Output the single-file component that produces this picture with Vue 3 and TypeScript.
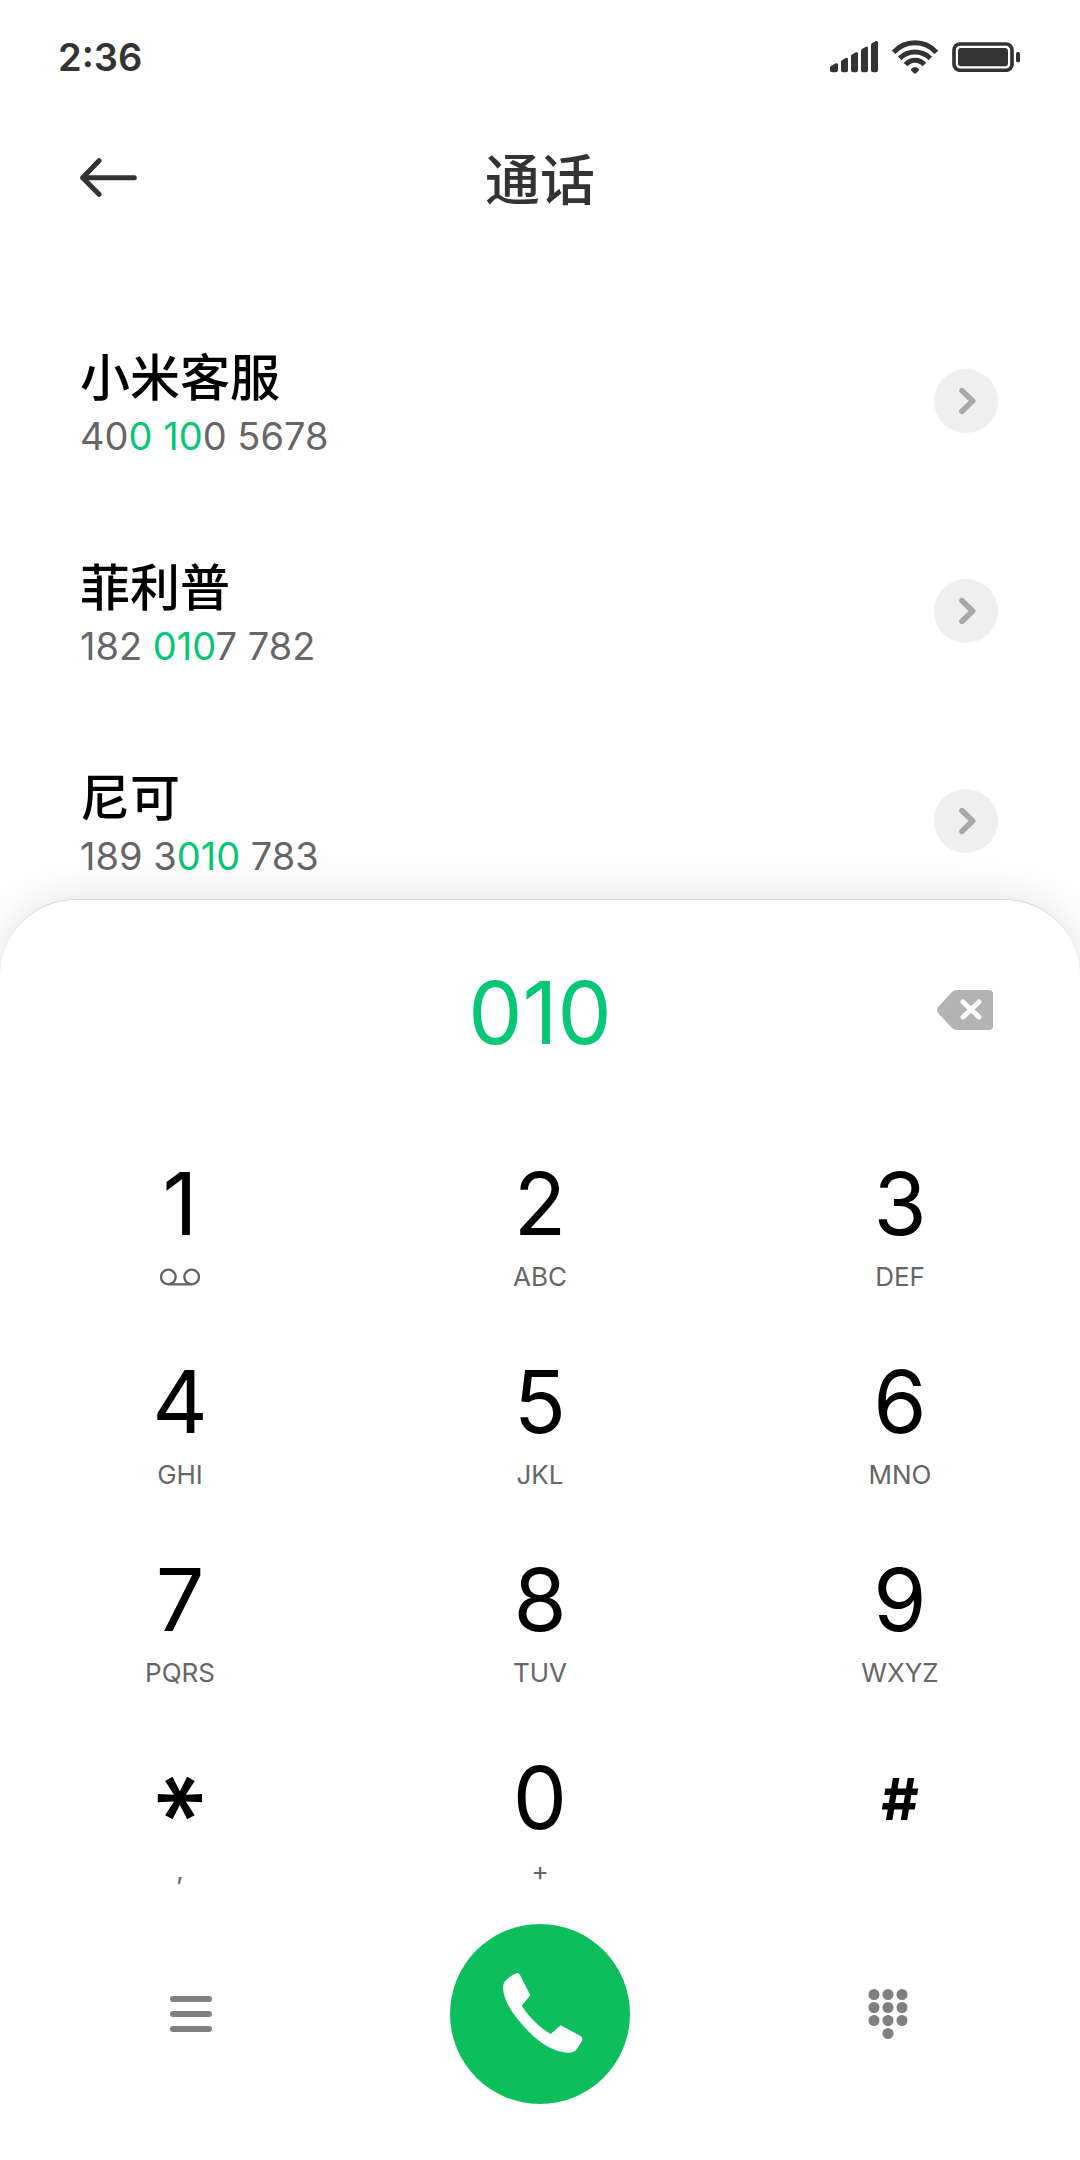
<script setup lang="ts">
import { computed, ref } from 'vue'

interface Contact {
  name: string
  phone: string
}

interface Key {
  symbol: string
  label: string
}

interface Segment {
  text: string
  hit: boolean
}

const contacts: Contact[] = [
  { name: '小米客服', phone: '400 100 5678' },
  { name: '菲利普', phone: '182 0107 782' },
  { name: '尼可', phone: '189 3010 783' },
]

const keys: Key[] = [
  { symbol: '1', label: '' },
  { symbol: '2', label: 'ABC' },
  { symbol: '3', label: 'DEF' },
  { symbol: '4', label: 'GHI' },
  { symbol: '5', label: 'JKL' },
  { symbol: '6', label: 'MNO' },
  { symbol: '7', label: 'PQRS' },
  { symbol: '8', label: 'TUV' },
  { symbol: '9', label: 'WXYZ' },
  { symbol: '*', label: ',' },
  { symbol: '0', label: '+' },
  { symbol: '#', label: '' },
]

const dialed = ref('010')

// Splits a phone number around the dialed digits, ignoring spaces.
function segments(phone: string, query: string): Segment[] {
  const match = query
    ? phone.match(new RegExp(query.replace(/[^0-9]/g, '').split('').join(' ?')))
    : null
  if (!match || match.index === undefined) return [{ text: phone, hit: false }]
  const end = match.index + match[0].length
  return [
    { text: phone.slice(0, match.index), hit: false },
    { text: match[0], hit: true },
    { text: phone.slice(end), hit: false },
  ]
}

const rows = computed(() =>
  contacts.map((c) => ({ ...c, parts: segments(c.phone, dialed.value) })),
)

function press(symbol: string) {
  dialed.value += symbol
}

function erase() {
  dialed.value = dialed.value.slice(0, -1)
}
</script>

<template>
  <div class="page">
    <div class="status">
      <span class="time">2:36</span>
      <div class="indicators">
        <svg width="48" height="32" viewBox="0 0 144 96" fill="#333">
          <path d="M0 80Q0 76 4 74L18 67Q24 65 24 71V87Q24 94 17 94H7Q0 94 0 87Z" />
          <path d="M33 63Q33 59 37 57L48 51Q54 49 54 55V88Q54 94 48 94H39Q33 94 33 88Z" />
          <path d="M63 46Q63 42 67 40L78 34Q84 32 84 38V88Q84 94 78 94H69Q63 94 63 88Z" />
          <path d="M93 29Q93 25 97 23L108 17Q114 15 114 21V88Q114 94 108 94H99Q93 94 93 88Z" />
          <path d="M123 12Q123 8 127 6L138 0Q144 -1 144 5V88Q144 94 138 94H129Q123 94 123 88Z" />
        </svg>
        <svg width="46" height="34" viewBox="0 0 138 102" fill="none" stroke="#333" stroke-width="15">
          <path d="M5 37A85 85 0 0 1 133 37" />
          <path d="M23 55A66 66 0 0 1 115 55" />
          <path d="M41 74A36 36 0 0 1 97 74" />
          <path d="M58 86Q69 76 80 86Q83 90 79 93L73 99Q69 102 65 99L59 93Q55 90 58 86Z" fill="#333" stroke="none" />
        </svg>
        <svg width="68" height="30" viewBox="0 0 204 90">
          <rect x="6" y="6" width="174" height="79" rx="18" fill="none" stroke="#333" stroke-width="11" />
          <rect x="18" y="18" width="150" height="55" rx="9" fill="#333" />
          <rect x="192" y="30" width="12" height="31" rx="5" fill="#333" />
        </svg>
      </div>
    </div>

    <header class="header">
      <button class="icon-button" type="button" aria-label="返回">
        <svg width="57" height="39" viewBox="0 0 171 117" fill="none" stroke="#333" stroke-width="15" stroke-linecap="round" stroke-linejoin="round">
          <path d="M57 8L8 59L57 109M8 59H163" />
        </svg>
      </button>
      <h1 class="title">通话</h1>
    </header>

    <ul class="contacts">
      <li v-for="row in rows" :key="row.name" class="contact">
        <div class="details">
          <div class="name">{{ row.name }}</div>
          <div class="phone"><span v-for="(part, i) in row.parts" :key="i" :class="{ hit: part.hit }">{{ part.text }}</span></div>
        </div>
        <button class="more" type="button" :aria-label="row.name">
          <svg width="64" height="64" viewBox="0 0 192 192" fill="none" stroke="#a8a8a8" stroke-width="17" stroke-linecap="round" stroke-linejoin="round">
            <path d="M84 65L116 96L84 127" />
          </svg>
        </button>
      </li>
    </ul>

    <section class="sheet">
      <div class="display">
        <output class="dialed">{{ dialed }}</output>
        <button class="icon-button erase" type="button" aria-label="删除" @click="erase">
          <svg width="56" height="40" viewBox="0 0 56 40">
            <path d="M20 0H52Q56 0 56 4V36Q56 40 52 40H20Q17 40 15 38L1 23Q-1 20 1 17L15 2Q17 0 20 0Z" fill="#b3b3b3" />
            <path d="M26 12L42 27M42 12L26 27" stroke="#fff" stroke-width="5" stroke-linecap="round" />
          </svg>
        </button>
      </div>

      <div class="keypad">
        <button v-for="key in keys" :key="key.symbol" class="key" type="button" @click="press(key.symbol)">
          <span class="symbol" :class="{ star: key.symbol === '*', hash: key.symbol === '#' }">{{ key.symbol }}</span>
          <span class="label">
            <svg v-if="key.symbol === '1'" width="40" height="18" viewBox="0 0 120 54" fill="none" stroke="#666" stroke-width="7">
              <circle cx="25" cy="27" r="22" />
              <circle cx="95" cy="27" r="22" />
              <path d="M25 49H95" />
            </svg>
            <template v-else>{{ key.label }}</template>
          </span>
        </button>
      </div>

      <div class="actions">
        <button class="icon-button" type="button" aria-label="菜单">
          <svg width="42" height="36" viewBox="0 0 42 36" fill="#808080">
            <rect v-for="y in [0, 15, 30]" :key="y" :y="y" width="42" height="6" rx="3" />
          </svg>
        </button>
        <button class="call" type="button" aria-label="拨打">
          <svg width="180" height="180" viewBox="0 0 180 180" fill="#fff">
            <path d="M67 49Q69 49 70 51L80.300 71.300L71.700 81.700C79 93 89 103 100.700 110L110.700 101.300L131 112.300Q133 114 132 117L127 125Q124 129 117.300 128.700C104 128 89 119 76.700 105.500C65 93 54 79 53 64.300Q53 59 56 56.300Q61 51 67 49Z" />
          </svg>
        </button>
        <button class="icon-button" type="button" aria-label="拨号盘">
          <svg width="42" height="50" viewBox="0 0 42 50" fill="#808080">
            <template v-for="y in [5.5, 18.5, 31.5]" :key="y">
              <circle v-for="x in [6, 20, 34]" :key="x" :cx="x" :cy="y" r="5.500" />
            </template>
            <circle cx="20" cy="44.500" r="5.500" />
          </svg>
        </button>
      </div>
    </section>
  </div>
</template>

<style>
body {
  background: #fff;
}
</style>

<style scoped>
.page {
  display: flex;
  flex-direction: column;
  height: 100vh;
  background: #fff;
  color: #000;
  font-family: Inter, 'Noto Sans CJK SC', sans-serif;
}

button {
  padding: 0;
  border: 0;
  background: none;
  color: inherit;
  font: inherit;
  cursor: pointer;
}

svg {
  display: block;
}

.status {
  display: flex;
  flex: none;
  align-items: center;
  justify-content: space-between;
  height: 114px;
  padding: 0 60px 0 58px;
}

.time {
  color: #333;
  font-size: 38px;
  font-weight: 600;
}

.indicators {
  display: flex;
  align-items: center;
  gap: 14px;
}

.header {
  display: grid;
  flex: none;
  grid-template-columns: 1fr auto 1fr;
  align-items: center;
  height: 126px;
  padding: 0 80px;
}

.icon-button {
  justify-self: start;
}

.title {
  margin: 0;
  padding-top: 6px;
  color: #333;
  font-size: 55px;
  font-weight: 500;
  line-height: 80px;
}

.contacts {
  flex: 1 1 0;
  min-height: 210px;
  margin: 0;
  padding: 56px 0 0;
  overflow: hidden;
  list-style: none;
}

.contact {
  display: flex;
  align-items: center;
  justify-content: space-between;
  height: 210px;
  padding: 0 82px 0 80px;
}

.details {
  padding-top: 6px;
}

.name {
  font-size: 50px;
  font-weight: 500;
  line-height: 64px;
}

.phone {
  color: #666;
  font-size: 38px;
  line-height: 52px;
  white-space: pre;
}

.hit {
  color: #05c776;
}

.more {
  border-radius: 50%;
  background: #efefef;
}

.sheet {
  position: relative;
  flex: none;
  border-top: 1px solid #d8d8d8;
  border-radius: 76px 76px 0 0;
  background: #fff;
  box-shadow: 0 0 50px rgba(0, 0, 0, 0.12);
}

.display {
  display: grid;
  grid-template-columns: 1fr auto 1fr;
  align-items: center;
  height: 226px;
  padding: 0 87px;
}

.dialed {
  grid-column: 2;
  color: #05c776;
  font-size: 86px;
  line-height: 96px;
}

.erase {
  justify-self: end;
  padding-bottom: 6px;
}

.keypad {
  display: grid;
  grid-template-columns: repeat(3, 1fr);
}

.key {
  display: flex;
  flex-direction: column;
  align-items: center;
  gap: 14px;
  height: 198px;
  padding-top: 35px;
}

.symbol {
  height: 86px;
  font-size: 86px;
  line-height: 86px;
}

.hash {
  font-size: 58px;
  font-weight: 700;
  line-height: 88px;
}

/* The asterisk is turned so that one of its bars lies flat. */
.star {
  font-size: 108px;
  font-weight: 500;
  line-height: 122px;
  transform: rotate(90deg);
}

.label {
  display: flex;
  align-items: center;
  height: 32px;
  color: #666;
  font-size: 26px;
  line-height: 32px;
}

.actions {
  display: flex;
  align-items: center;
  justify-content: space-between;
  padding: 6px 170px 56px;
}

.call {
  border-radius: 50%;
  background: #0cbf5c;
}
</style>
